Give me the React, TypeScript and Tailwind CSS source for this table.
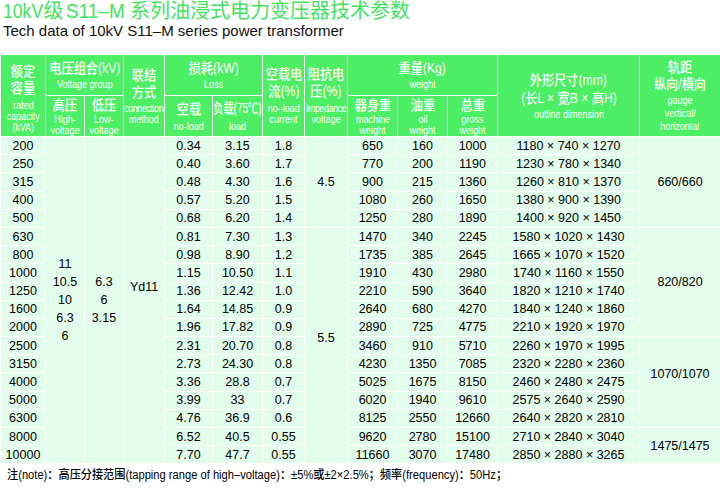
import React from "react";

const rows: string[][] = [
  ["200", "0.34", "3.15", "1.8", "650", "160", "1000", "1180 × 740 × 1270"],
  ["250", "0.40", "3.60", "1.7", "770", "200", "1190", "1230 × 780 × 1340"],
  ["315", "0.48", "4.30", "1.6", "900", "215", "1360", "1260 × 810 × 1370"],
  ["400", "0.57", "5.20", "1.5", "1080", "260", "1650", "1380 × 900 × 1390"],
  ["500", "0.68", "6.20", "1.4", "1250", "280", "1890", "1400 × 920 × 1450"],
  ["630", "0.81", "7.30", "1.3", "1470", "340", "2245", "1580 × 1020 × 1430"],
  ["800", "0.98", "8.90", "1.2", "1735", "385", "2645", "1665 × 1070 × 1520"],
  ["1000", "1.15", "10.50", "1.1", "1910", "430", "2980", "1740 × 1160 × 1550"],
  ["1250", "1.36", "12.42", "1.0", "2210", "590", "3640", "1820 × 1210 × 1740"],
  ["1600", "1.64", "14.85", "0.9", "2640", "680", "4270", "1840 × 1240 × 1860"],
  ["2000", "1.96", "17.82", "0.9", "2890", "725", "4775", "2210 × 1920 × 1970"],
  ["2500", "2.31", "20.70", "0.8", "3460", "910", "5710", "2260 × 1970 × 1995"],
  ["3150", "2.73", "24.30", "0.8", "4230", "1350", "7085", "2320 × 2280 × 2360"],
  ["4000", "3.36", "28.8", "0.7", "5025", "1675", "8150", "2460 × 2480 × 2475"],
  ["5000", "3.99", "33", "0.7", "6020", "1940", "9610", "2575 × 2640 × 2590"],
  ["6300", "4.76", "36.9", "0.6", "8125", "2550", "12660", "2640 × 2820 × 2810"],
  ["8000", "6.52", "40.5", "0.55", "9620", "2780", "15100", "2710 × 2840 × 3040"],
  ["10000", "7.70", "47.7", "0.55", "11660", "3070", "17480", "2850 × 2880 × 3265"],
];

const widths = [45, 39, 39, 41, 48, 50, 42, 43, 50, 50, 50, 142, 81];

const th = "border border-white bg-[#4cef63] text-white text-center align-middle p-0 font-normal";
const td = "border border-white text-center align-middle p-0 h-[18.2px]";

function C({ children, className = "" }: { children: React.ReactNode; className?: string }) {
  return (
    <div className={"flex justify-center whitespace-nowrap text-[14px] leading-[17px] font-medium " + className}>
      <span className="inline-block scale-x-[0.87]">{children}</span>
    </div>
  );
}

function E({ children, className = "" }: { children: React.ReactNode; className?: string }) {
  return (
    <div className={"flex justify-center whitespace-nowrap text-[10px] leading-[11px] " + className}>
      <span className="inline-block scale-x-[0.9]">{children}</span>
    </div>
  );
}

export default function App() {
  return (
    <div className="w-[720px] h-[492px] bg-white overflow-hidden">
      <div className="font-['Liberation_Sans','Noto_Sans_CJK_SC',sans-serif]">
        <div className="pl-[3px] h-[23px] text-[#43e25d] text-[20px] leading-[23px] whitespace-nowrap">
          <span className="inline-block scale-x-[0.88] origin-left mr-[-5px]">10kV</span>
          级
          <span className="inline-block scale-x-[0.95] origin-left mr-[-3px] ml-[2px]">S11–M</span>{" "}
          系列油浸式电力变压器技术参数
        </div>
        <div className="pl-[3px] h-[31px] text-[#111] text-[15px] leading-[15px] whitespace-nowrap">
          Tech data of 10kV S11–M series power transformer
        </div>
        <table className="table-fixed border-collapse w-[720px]">
          <colgroup>
            {widths.map((w, i) => (
              <col key={i} style={{ width: w }} />
            ))}
          </colgroup>
          <thead>
            <tr className="h-[41px]">
              <th rowSpan={2} className={th + " pt-[5px]"}>
                <C>额定</C>
                <C className="mb-[3px]">容量</C>
                <E>rated</E>
                <E>capacity</E>
                <E>(kVA)</E>
              </th>
              <th colSpan={2} className={th}>
                <C>电压组合(kV)</C>
                <E className="mt-[2px]">Voltage group</E>
              </th>
              <th rowSpan={2} className={th}>
                <C>联结</C>
                <C className="mb-[2px]">方式</C>
                <E className="tracking-[-0.5px]">connection</E>
                <E>method</E>
              </th>
              <th colSpan={2} className={th}>
                <C>损耗(kW)</C>
                <E className="mt-[2px]">Loss</E>
              </th>
              <th rowSpan={2} className={th}>
                <C>空载电</C>
                <C className="mb-[3px]">流(%)</C>
                <E>no–load</E>
                <E>current</E>
              </th>
              <th rowSpan={2} className={th}>
                <C>阻抗电</C>
                <C className="mb-[3px]">压(%)</C>
                <E className="tracking-[-0.5px]">impedance</E>
                <E>voltage</E>
              </th>
              <th colSpan={3} className={th}>
                <C>重量(Kg)</C>
                <E className="mt-[2px]">weight</E>
              </th>
              <th rowSpan={2} className={th}>
                <C>外形尺寸(mm)</C>
                <C className="mt-[1px]">(长L × 宽B × 高H)</C>
                <E className="mt-[2px]">outline dimension</E>
              </th>
              <th rowSpan={2} className={th}>
                <C>轨距</C>
                <C>纵向/横向</C>
                <E className="mt-[1px] leading-[13px]">gauge</E>
                <E className="leading-[13px]">vertical/</E>
                <E className="leading-[13px]">horizontal</E>
              </th>
            </tr>
            <tr className="h-[41px]">
              <th className={th}>
                <C>高压</C>
                <E>High-</E>
                <E>voltage</E>
              </th>
              <th className={th}>
                <C>低压</C>
                <E>Low-</E>
                <E>voltage</E>
              </th>
              <th className={th}>
                <C>空载</C>
                <E className="mt-[3px]">no-load</E>
              </th>
              <th className={th}>
                <div className="flex justify-center whitespace-nowrap text-[14px] leading-[17px] font-medium">
                  <span className="inline-block scale-x-[0.72]">负载(75℃)</span>
                </div>
                <E className="mt-[4px]">load</E>
              </th>
              <th className={th}>
                <C>器身重</C>
                <E>machine</E>
                <E>weight</E>
              </th>
              <th className={th}>
                <C>油重</C>
                <E>oil</E>
                <E>weight</E>
              </th>
              <th className={th}>
                <C>总重</C>
                <E>gross</E>
                <E>weight</E>
              </th>
            </tr>
          </thead>
          <tbody className="bg-[#e2fdeb] text-black text-[12.5px] leading-[16px]">
            {rows.map((r, i) => (
              <tr key={i}>
                <td className={td}>{r[0]}</td>
                {i === 0 && (
                  <>
                    <td rowSpan={18} className={td + " leading-[18px]"}>
                      11<br />10.5<br />10<br />6.3<br />6
                    </td>
                    <td rowSpan={18} className={td + " leading-[18px]"}>
                      6.3<br />6<br />3.15
                    </td>
                    <td rowSpan={18} className={td + " pb-[26px]"}>
                      Yd11
                    </td>
                  </>
                )}
                <td className={td}>{r[1]}</td>
                <td className={td}>{r[2]}</td>
                <td className={td}>{r[3]}</td>
                {i === 0 && (
                  <td rowSpan={5} className={td}>
                    4.5
                  </td>
                )}
                {i === 5 && (
                  <td rowSpan={13} className={td + " pb-[16px]"}>
                    5.5
                  </td>
                )}
                <td className={td}>{r[4]}</td>
                <td className={td}>{r[5]}</td>
                <td className={td}>{r[6]}</td>
                <td className={td + " whitespace-nowrap"}>{r[7]}</td>
                {i === 0 && (
                  <td rowSpan={5} className={td}>
                    660/660
                  </td>
                )}
                {i === 5 && (
                  <td rowSpan={6} className={td}>
                    820/820
                  </td>
                )}
                {i === 11 && (
                  <td rowSpan={5} className={td + " pb-[16px]"}>
                    1070/1070
                  </td>
                )}
                {i === 16 && (
                  <td rowSpan={2} className={td}>
                    1475/1475
                  </td>
                )}
              </tr>
            ))}
          </tbody>
        </table>
        <div className="pl-[7px] pt-[1px] text-[12px] leading-[20px] text-black font-medium whitespace-nowrap">
          <span className="inline-block scale-x-[0.93] origin-left">
            注(note)：高压分接范围(tapping range of high–voltage)：±5%或±2×2.5%；频率(frequency)：50Hz；
          </span>
        </div>
      </div>
    </div>
  );
}
